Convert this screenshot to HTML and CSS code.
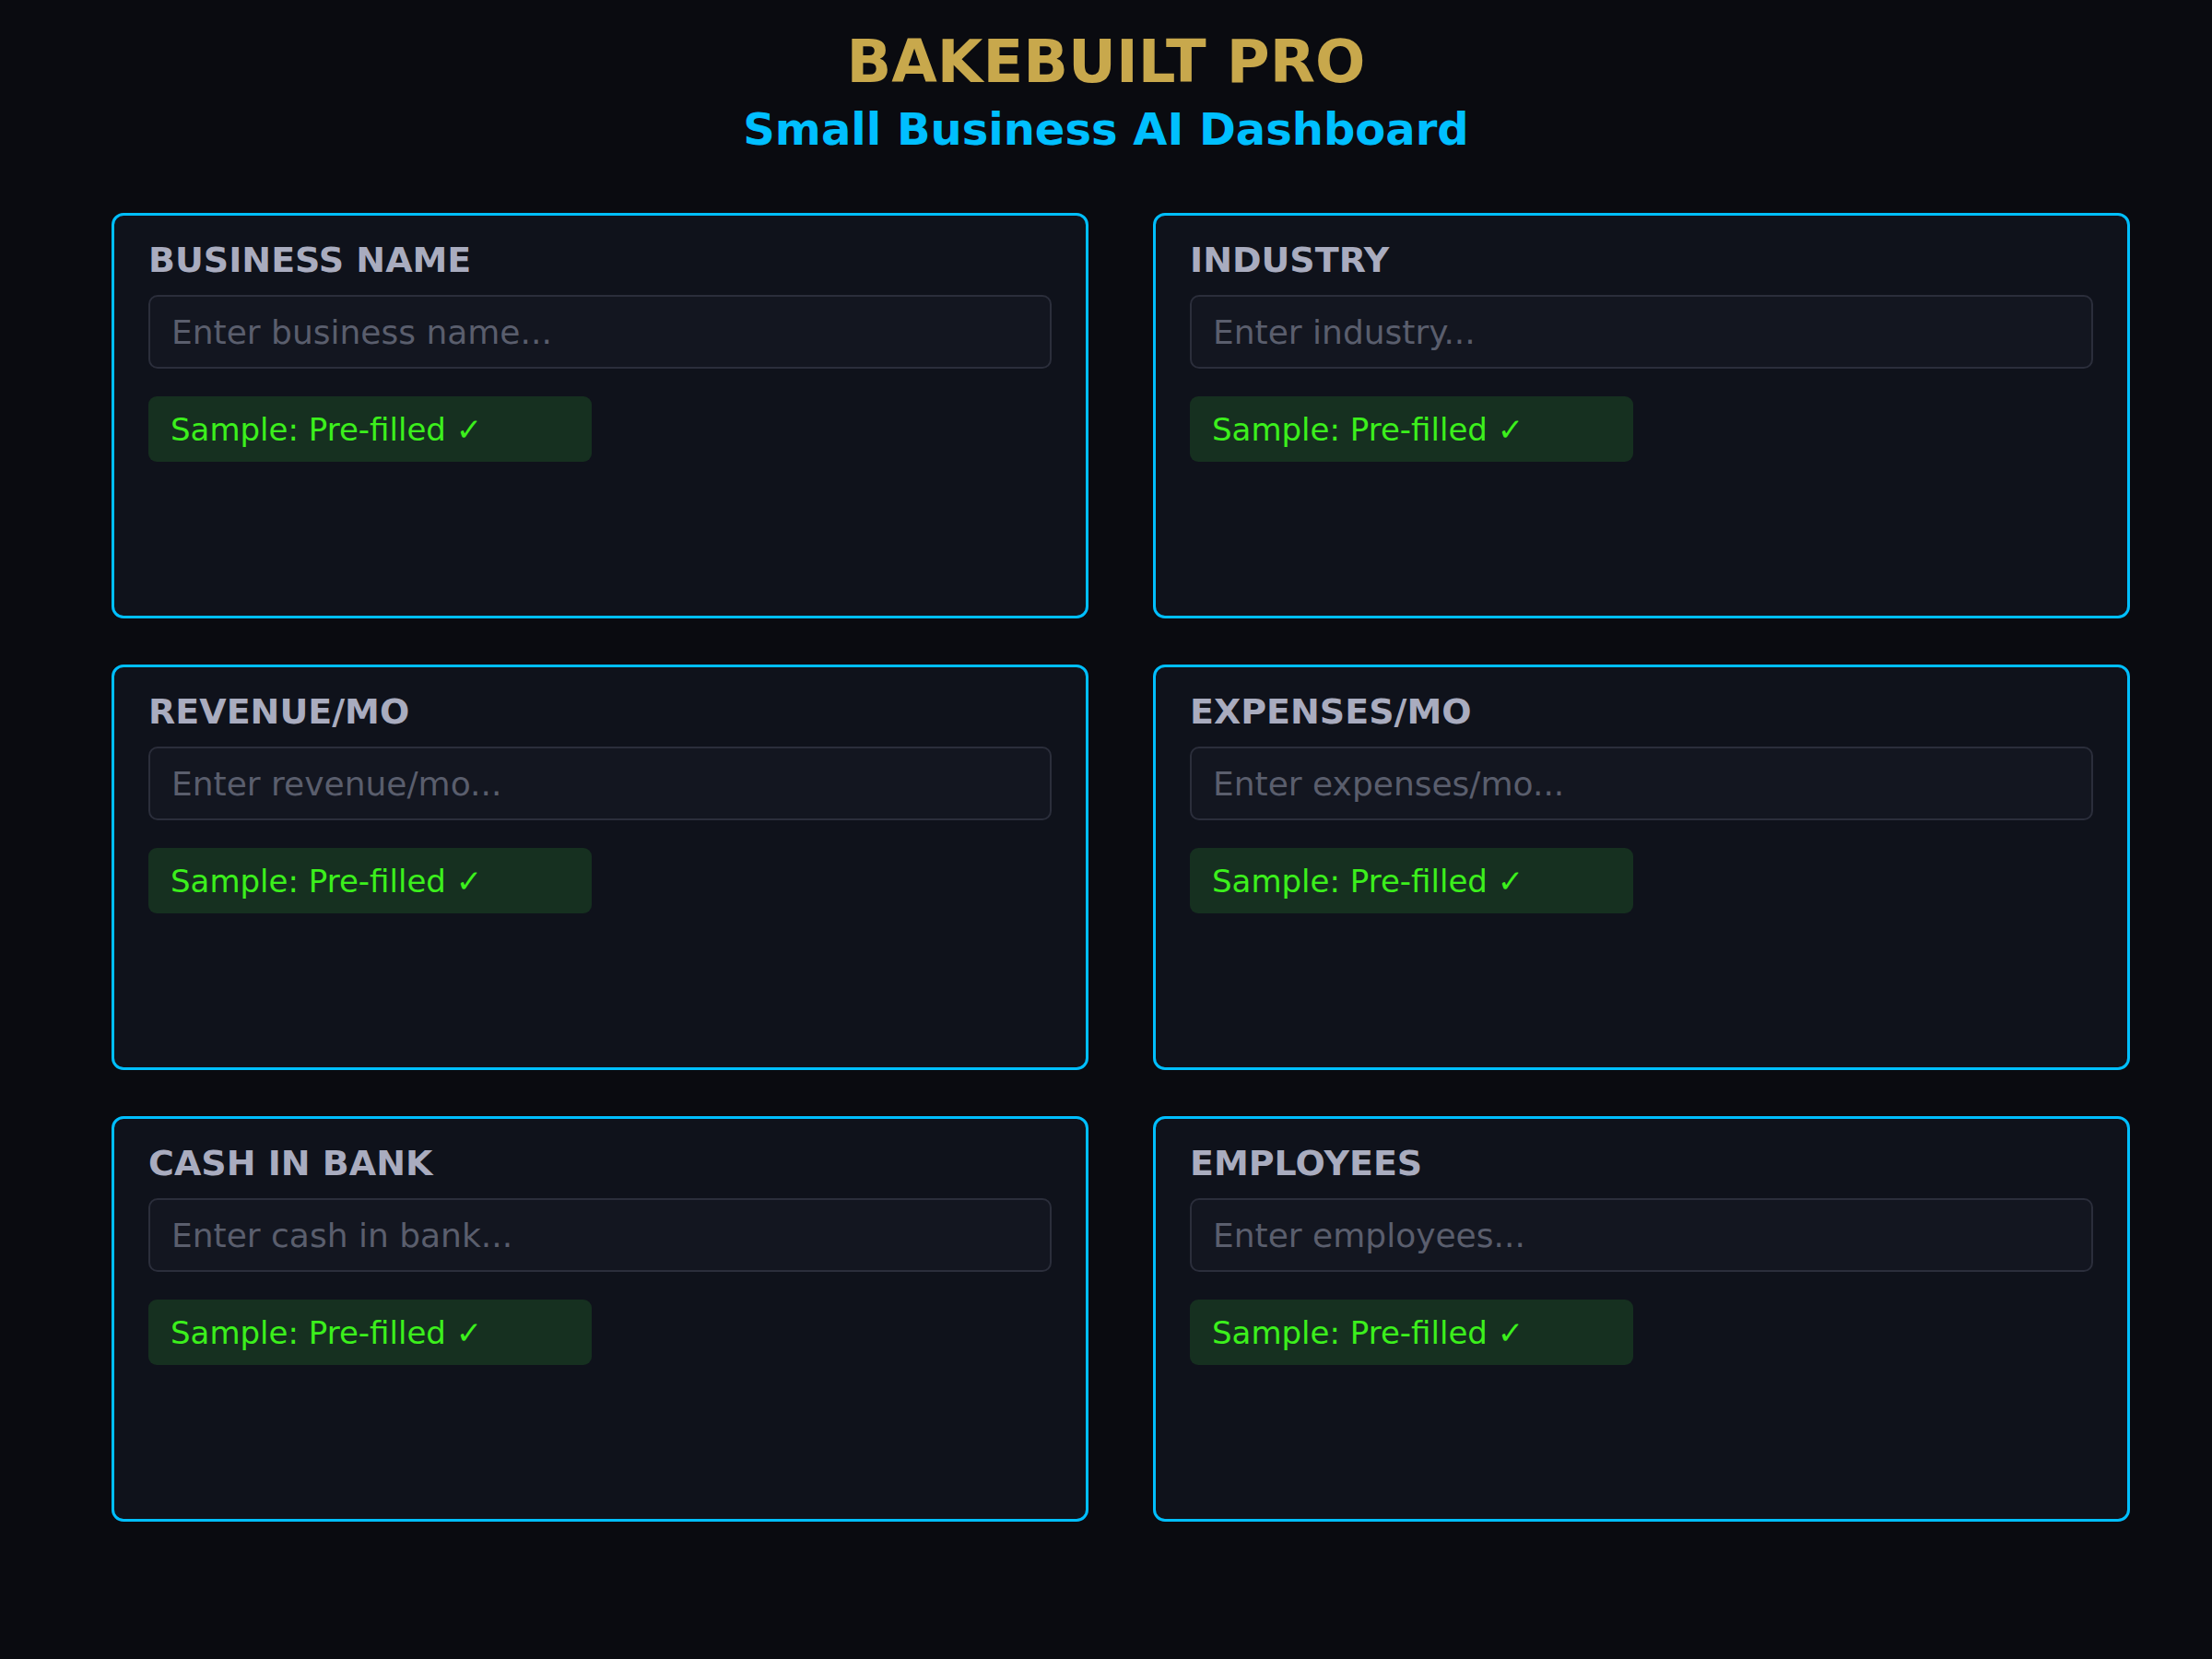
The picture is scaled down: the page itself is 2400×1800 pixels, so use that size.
FILE: index.html
```html
<!DOCTYPE html>
<html lang="en">
<head>
    <meta charset="UTF-8">
    <meta name="viewport" content="width=device-width, initial-scale=1.0">
    <title>BakeBuilt Pro</title>
    <link rel="stylesheet" href="styles.css">
</head>
<body>
    <header class="header">
        <h1>BAKEBUILT PRO</h1>
        <h2>Small Business AI Dashboard</h2>
    </header>

    <main class="grid">
        <div class="card">
            <label class="label" for="bizName">BUSINESS NAME</label>
            <input class="field" id="bizName" type="text" placeholder="Enter business name...">
            <div class="badge">Sample: Pre-filled ✓</div>
        </div>
        <div class="card">
            <label class="label" for="industry">INDUSTRY</label>
            <input class="field" id="industry" type="text" placeholder="Enter industry...">
            <div class="badge">Sample: Pre-filled ✓</div>
        </div>
        <div class="card">
            <label class="label" for="revenue">REVENUE/MO</label>
            <input class="field" id="revenue" type="text" placeholder="Enter revenue/mo...">
            <div class="badge">Sample: Pre-filled ✓</div>
        </div>
        <div class="card">
            <label class="label" for="expenses">EXPENSES/MO</label>
            <input class="field" id="expenses" type="text" placeholder="Enter expenses/mo...">
            <div class="badge">Sample: Pre-filled ✓</div>
        </div>
        <div class="card">
            <label class="label" for="cash">CASH IN BANK</label>
            <input class="field" id="cash" type="text" placeholder="Enter cash in bank...">
            <div class="badge">Sample: Pre-filled ✓</div>
        </div>
        <div class="card">
            <label class="label" for="employees">EMPLOYEES</label>
            <input class="field" id="employees" type="text" placeholder="Enter employees...">
            <div class="badge">Sample: Pre-filled ✓</div>
        </div>
    </main>
</body>
</html>
```

FILE: styles.css
```css
body {
    margin: 0;
    min-height: 100vh;
    background: #0a0b10;
    font-family: "DejaVu Sans", "Liberation Sans", sans-serif;
}

.header {
    text-align: center;
    padding-top: 30px;
}
.header h1 {
    margin: 0;
    font-size: 64px;
    font-weight: 700;
    color: #c8a84c;
}
.header h2 {
    margin: 8px 0 0;
    font-size: 48px;
    font-weight: 700;
    color: #00bfff;
}

.grid {
    display: grid;
    grid-template-columns: repeat(2, 1fr);
    gap: 50px 70px;
    padding: 0 89px 0 121px;
    margin-top: 63px;
}

.card {
    display: flex;
    flex-direction: column;
    align-items: flex-start;
    min-height: 440px;
    box-sizing: border-box;
    padding: 26px 37px;
    background: #0f121b;
    border: 3px solid #00bfff;
    border-radius: 13px;
}

.label {
    font-size: 38px;
    font-weight: 700;
    color: #a9acbf;
}

.field {
    width: 100%;
    height: 80px;
    box-sizing: border-box;
    margin-top: 16px;
    padding: 0 23px;
    background: #131620;
    border: 2px solid #2b2e3b;
    border-radius: 10px;
    font-family: inherit;
    font-size: 36px;
    color: #c9ccd8;
    outline: none;
}
.field::placeholder {
    color: #5a5e6d;
}

.badge {
    width: 481px;
    height: 71px;
    box-sizing: border-box;
    margin-top: 30px;
    padding: 0 24px;
    display: flex;
    align-items: center;
    background: #163020;
    border-radius: 9px;
    font-size: 34px;
    color: #3cf01c;
}
```
